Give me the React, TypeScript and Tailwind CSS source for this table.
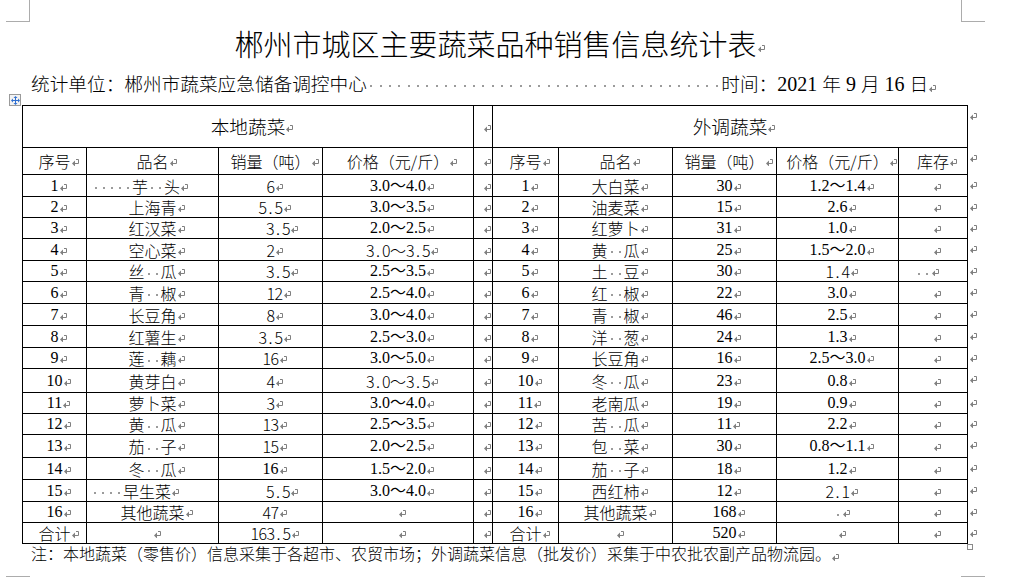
import React from "react";

const serif = "font-['Liberation_Serif','Noto_Sans_CJK_SC',serif]";
const cjk = "font-['Noto_Sans_CJK_SC',sans-serif] font-light";

type V = { t: string; f?: "s" | "m" | "c"; x?: string };
const S = (t: string, x?: string): V => ({ t, f: "s", x });
const M = (t: string, x?: string): V => ({ t, f: "m", x });
const C = (t: string, x?: string): V => ({ t, f: "c", x });
const E: V = { t: "" };

function Mark({ cls = "shrink-0 ml-px -mr-[8px] mt-[3px]" }: { cls?: string }) {
  return (
    <svg width="7" height="7" viewBox="0 0 7 7" className={cls}>
      <path d="M4 0.5H6.5V4.5H2.5" stroke="#808080" strokeWidth="1" fill="none" />
      <path d="M0 4.5L3 1.5V7.5Z" fill="#808080" />
    </svg>
  );
}

function Dot() {
  return (
    <span className="inline-flex w-[0.5em] justify-center align-middle">
      <span className="w-[2px] h-[2px] bg-[#9b9b9b]" />
    </span>
  );
}

function chars(s: string) {
  const out: React.ReactNode[] = [];
  let buf = "";
  let k = 0;
  for (const ch of s) {
    if (ch === "·") {
      if (buf) out.push(<React.Fragment key={k++}>{buf}</React.Fragment>);
      buf = "";
      out.push(<Dot key={k++} />);
    } else buf += ch;
  }
  if (buf) out.push(<React.Fragment key={k++}>{buf}</React.Fragment>);
  return out;
}

/* SimSun-like half-width digits: every character on a fixed half-em cell */
function monoChars(s: string) {
  return Array.from(s).map((ch, i) => (
    <span key={i} className={`inline-block text-center ${ch === "～" ? "w-[1em]" : "w-[0.5em]"}`}>
      {ch}
    </span>
  ));
}

function Val({ v }: { v: V }) {
  if (!v.t) return null;
  if (v.f === "m") {
    return <span className={`${cjk} whitespace-pre ${v.x ?? ""}`}>{monoChars(v.t)}</span>;
  }
  const fc = v.f === "s" ? serif : cjk;
  return <span className={`${fc} whitespace-pre ${v.x ?? ""}`}>{chars(v.t)}</span>;
}

function Cell({ children, cls = "" }: { children?: React.ReactNode; cls?: string }) {
  return (
    <div className={`flex items-center justify-center border-r border-b border-black ${cls}`}>
      {children}
      <Mark />
    </div>
  );
}

function Out({ cls = "pt-[7px]" }: { cls?: string }) {
  return (
    <div className={`pl-[2px] ${cls}`}>
      <Mark cls="block" />
    </div>
  );
}

const left: V[][] = [
  [S("1"), C("·····芋··头", "-ml-[33px]"), M("6"), S("3.0～4.0")],
  [S("2"), C("上海青"), M("5.5"), S("3.0～3.5")],
  [S("3"), C("红汉菜"), M("3.5", "pl-[15px]"), S("2.0～2.5")],
  [S("4"), C("空心菜"), M("2"), M("3.0～3.5")],
  [S("5"), C("丝··瓜"), M("3.5", "pl-[15px]"), S("2.5～3.5")],
  [S("6"), C("青··椒"), M("12", "pl-[8px]"), S("2.5～4.0")],
  [S("7"), C("长豆角"), M("8"), S("3.0～4.0")],
  [S("8"), C("红薯生"), M("3.5"), S("2.5～3.0")],
  [S("9"), C("莲··藕"), M("16"), S("3.0～5.0")],
  [S("10"), C("黄芽白"), M("4"), M("3.0～3.5")],
  [S("11"), C("萝卜菜"), M("3"), S("3.0～4.0")],
  [S("12"), C("黄··瓜"), M("13"), S("2.5～3.5")],
  [S("13"), C("茄··子"), M("15"), S("2.0～2.5")],
  [S("14"), C("冬··瓜"), S("16"), S("1.5～2.0")],
  [S("15"), C("····早生菜", "-ml-[43px]"), M("5.5", "pl-[15px]"), S("3.0～4.0")],
  [S("16"), C("其他蔬菜"), M("47"), E],
  [C("合计"), E, M("163.5"), E],
];

const right: V[][] = [
  [S("1"), C("大白菜"), S("30"), S("1.2～1.4"), E],
  [S("2"), C("油麦菜"), S("15"), S("2.6"), E],
  [S("3"), C("红萝卜"), S("31"), S("1.0"), E],
  [S("4"), C("黄··瓜"), S("25"), S("1.5～2.0"), E],
  [S("5"), C("土··豆"), S("30"), M("1.4"), C("··", "-ml-[20px]")],
  [S("6"), C("红··椒"), S("22"), S("3.0"), E],
  [S("7"), C("青··椒"), S("46"), S("2.5"), E],
  [S("8"), C("洋··葱"), S("24"), S("1.3"), E],
  [S("9"), C("长豆角"), S("16"), S("2.5～3.0"), E],
  [S("10"), C("冬··瓜"), S("23"), S("0.8"), E],
  [S("11"), C("老南瓜"), S("19"), S("0.9"), E],
  [S("12"), C("苦··瓜"), S("11"), S("2.2"), E],
  [S("13"), C("包··菜"), S("30"), S("0.8～1.1"), E],
  [S("14"), C("茄··子"), S("18"), S("1.2"), E],
  [S("15"), C("西红柿"), S("12"), M("2.1"), E],
  [S("16"), C("其他蔬菜"), S("168"), C("·"), E],
  [C("合计"), E, S("520"), E, E],
];

const heads = ["序号", "品名", "销量（吨）", "价格（元/斤）"];

export default function App() {
  return (
    <div className="relative w-[1012px] h-[577px] bg-white overflow-hidden text-black">
      {/* page crop marks */}
      <div className="absolute left-[29px] top-0 w-px h-[21px] bg-[#acacac]" />
      <div className="absolute left-[6px] top-[21px] w-[24px] h-px bg-[#acacac]" />
      <div className="absolute left-[961px] top-0 w-px h-[21px] bg-[#acacac]" />
      <div className="absolute left-[961px] top-[21px] w-[24px] h-px bg-[#acacac]" />
      <div className="absolute left-[6px] top-[576px] w-[24px] h-px bg-[#acacac]" />
      <div className="absolute left-[961px] top-[576px] w-[24px] h-px bg-[#acacac]" />

      {/* table move handle */}
      <div className="absolute left-[9px] top-[94px] w-[12px] h-[12px] border border-[#9a9a9a] bg-[#f3f3f3] flex items-center justify-center">
        <svg width="9" height="9" viewBox="0 0 9 9">
          <path d="M4.5 1V8M1 4.5H8" stroke="#2f6fd0" strokeWidth="1" />
          <path d="M4.5 0L2.5 2H6.5Z M4.5 9L2.5 7H6.5Z M0 4.5L2 2.5V6.5Z M9 4.5L7 2.5V6.5Z" fill="#2f6fd0" />
        </svg>
      </div>
      {/* table end marker */}
      <div className="absolute left-[967px] top-[544px] w-[6px] h-[6px] border border-[#8a8a8a]" />

      {/* title */}
      <div className="pt-[28px] pl-[31px] w-[960px]">
        <div className="h-[30px] flex items-center justify-center">
          <span className={`${cjk} text-[29px] leading-none`}>郴州市城区主要蔬菜品种销售信息统计表</span>
          <Mark cls="shrink-0 ml-px -mr-[8px] mt-[11px]" />
        </div>
      </div>

      {/* subtitle */}
      <div className={`mt-[15px] pl-[31px] h-[20px] leading-[20px] whitespace-pre text-[18.67px] ${cjk}`}>
        <span>统计单位：郴州市蔬菜应急储备调控中心</span>
        {Array.from({ length: 38 }).map((_, i) => (
          <Dot key={i} />
        ))}
        <span>时间：</span>
        <span className={`${serif} font-normal text-[20px]`}>2021 </span>
        <span>年</span>
        <span className={`${serif} font-normal text-[20px]`}> 9 </span>
        <span>月</span>
        <span className={`${serif} font-normal text-[20px]`}> 16 </span>
        <span>日</span>
        <Mark cls="inline-block ml-px align-[-1px]" />
      </div>

      {/* table */}
      <div className="ml-[22px] mt-[12px] grid grid-cols-[65px_132px_104px_151px_19px_66px_114px_104px_122px_69px_24px] grid-rows-[43px_27px_22px_21px_21px_22px_21px_22px_22px_22px_21px_24px_21px_21px_23px_22px_22px_21px_21px] text-[16px] leading-none">
        <Cell cls="col-span-4 border-l border-t">
          <span className={`${cjk} text-[18.67px]`}>本地蔬菜</span>
        </Cell>
        <Cell cls="border-t" />
        <Cell cls="col-span-5 border-t">
          <span className={`${cjk} text-[18.67px]`}>外调蔬菜</span>
        </Cell>
        <Out cls="pt-[8px]" />

        {heads.map((h, i) => (
          <Cell key={"lh" + i} cls={i === 0 ? "border-l" : ""}>
            <span className={cjk}>{h}</span>
          </Cell>
        ))}
        <Cell />
        {[...heads, "库存"].map((h, i) => (
          <Cell key={"rh" + i}>
            <span className={cjk}>{h}</span>
          </Cell>
        ))}
        <Out />

        {left.map((row, r) => (
          <React.Fragment key={"r" + r}>
            {row.map((v, i) => (
              <Cell key={"l" + i} cls={i === 0 ? "border-l" : ""}>
                <Val v={v} />
              </Cell>
            ))}
            <Cell />
            {right[r].map((v, i) => (
              <Cell key={"rr" + i}>
                <Val v={v} />
              </Cell>
            ))}
            <Out />
          </React.Fragment>
        ))}
      </div>

      {/* footnote */}
      <div className={`pl-[31px] h-[18px] leading-[18px] text-[16px] whitespace-nowrap ${cjk}`}>
        注：本地蔬菜（零售价）信息采集于各超市、农贸市场；外调蔬菜信息（批发价）采集于中农批农副产品物流园。
        <Mark cls="inline-block ml-px align-[-1px]" />
      </div>
    </div>
  );
}
